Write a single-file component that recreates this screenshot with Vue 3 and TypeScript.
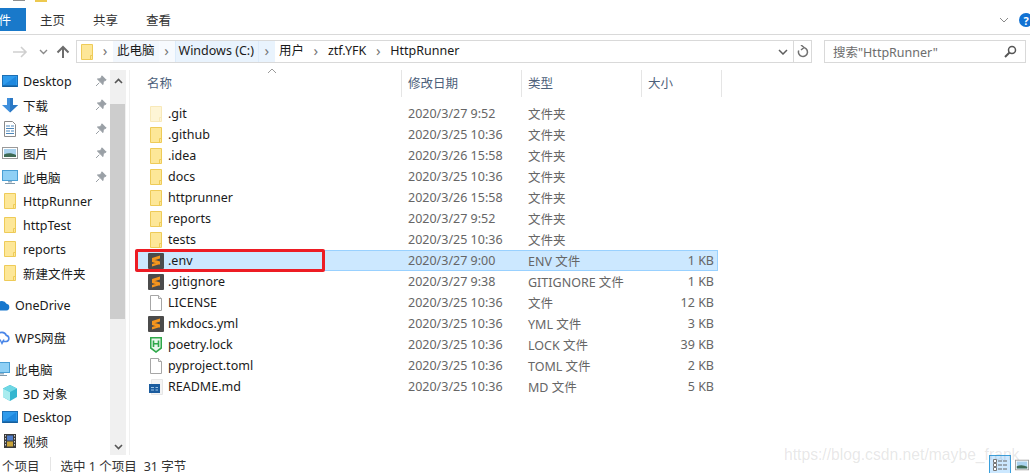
<script setup lang="ts">
interface NavItem { label: string; icon: string; pin?: boolean; gap?: boolean; shift?: boolean }
interface FileItem { name: string; date: string; type: string; size?: string; icon: string; selected?: boolean }

const nav: NavItem[] = [
  { label: 'Desktop', icon: 'i-desktop', pin: true },
  { label: '下载', icon: 'i-down', pin: true },
  { label: '文档', icon: 'i-doc', pin: true },
  { label: '图片', icon: 'i-pic', pin: true },
  { label: '此电脑', icon: 'i-pc', pin: true },
  { label: 'HttpRunner', icon: 'i-folder' },
  { label: 'httpTest', icon: 'i-folder' },
  { label: 'reports', icon: 'i-folder' },
  { label: '新建文件夹', icon: 'i-folder' },
  { label: 'OneDrive', icon: 'i-cloud', gap: true, shift: true },
  { label: 'WPS网盘', icon: 'i-wps', gap: true, shift: true },
  { label: '此电脑', icon: 'i-pc', gap: true, shift: true },
  { label: '3D 对象', icon: 'i-cube' },
  { label: 'Desktop', icon: 'i-desktop' },
  { label: '视频', icon: 'i-film' },
]

const files: FileItem[] = [
  { name: '.git', date: '2020/3/27 9:52', type: '文件夹', icon: 'i-folder-pale' },
  { name: '.github', date: '2020/3/25 10:36', type: '文件夹', icon: 'i-folder' },
  { name: '.idea', date: '2020/3/26 15:58', type: '文件夹', icon: 'i-folder' },
  { name: 'docs', date: '2020/3/25 10:36', type: '文件夹', icon: 'i-folder' },
  { name: 'httprunner', date: '2020/3/26 15:58', type: '文件夹', icon: 'i-folder' },
  { name: 'reports', date: '2020/3/27 9:52', type: '文件夹', icon: 'i-folder' },
  { name: 'tests', date: '2020/3/25 10:36', type: '文件夹', icon: 'i-folder' },
  { name: '.env', date: '2020/3/27 9:00', type: 'ENV 文件', size: '1 KB', icon: 'i-sublime', selected: true },
  { name: '.gitignore', date: '2020/3/27 9:38', type: 'GITIGNORE 文件', size: '1 KB', icon: 'i-sublime' },
  { name: 'LICENSE', date: '2020/3/25 10:36', type: '文件', size: '12 KB', icon: 'i-blank' },
  { name: 'mkdocs.yml', date: '2020/3/25 10:36', type: 'YML 文件', size: '3 KB', icon: 'i-sublime' },
  { name: 'poetry.lock', date: '2020/3/25 10:36', type: 'LOCK 文件', size: '39 KB', icon: 'i-hbuilder' },
  { name: 'pyproject.toml', date: '2020/3/25 10:36', type: 'TOML 文件', size: '2 KB', icon: 'i-blank' },
  { name: 'README.md', date: '2020/3/25 10:36', type: 'MD 文件', size: '5 KB', icon: 'i-md' },
]
</script>

<template>
  <div class="window">
    <svg class="defs" aria-hidden="true">
      <symbol id="i-folder" viewBox="0 0 16 16">
        <path d="M2.5 .5H13.5V15.5H2.5Z" fill="#fde798" stroke="#eecb58" />
        <path d="M11.5 15.5V11.5H13.5" fill="none" stroke="#eecb58" />
      </symbol>
      <symbol id="i-folder-pale" viewBox="0 0 16 16">
        <path d="M2.5 .5H13.5V15.5H2.5Z" fill="#fef5d6" stroke="#f8e9b9" />
        <path d="M11.5 15.5V11.5H13.5" fill="none" stroke="#f8e9b9" />
      </symbol>
      <symbol id="i-sublime" viewBox="0 0 16 16">
        <rect width="16" height="16" rx="1" fill="#4b4b4b" />
        <path d="M4 5 12 2.500V5.500L4 8ZM4 6 12 8.500V11.500L4 9ZM4 11 12 8.500V11L4 13.500Z" fill="#f5951d" />
      </symbol>
      <symbol id="i-blank" viewBox="0 0 16 16">
        <path d="M2.5 .5H10.5L13.5 3.5V15.5H2.5Z" fill="#fff" stroke="#a6a6a6" />
        <path d="M10.5 .5V3.5H13.5" fill="#f0f0f0" stroke="#a6a6a6" />
      </symbol>
      <symbol id="i-hbuilder" viewBox="0 0 16 16">
        <path d="M2 0H14V11.5L8 16 2 11.5Z" fill="#2fa84a" />
        <path d="M3.5 1.5H12.5V10.5L8 14 3.5 10.5Z" fill="#e9f7ec" />
        <path d="M5.5 3.5V10M10.5 3.5V10M5.5 6.7H10.5" stroke="#2fa84a" stroke-width="1.6" fill="none" />
      </symbol>
      <symbol id="i-md" viewBox="0 0 16 16">
        <path d="M3.5 .5H14.5V15.5H3.5Z" fill="#f4f4f4" stroke="#e6e6e6" />
        <rect x="1" y="5" width="11" height="9" fill="#1b5c9e" />
        <path d="M3 8.500H6M3 11H6M7.500 8.500H10M7.500 11H10" stroke="#9cc3e6" fill="none" />
      </symbol>
      <symbol id="i-desktop" viewBox="0 0 16 16">
        <rect x=".5" y="2.5" width="15" height="11" fill="#2f9bec" stroke="#1c6fb5" />
        <path d="M1 12.5 14 3.5V12.5Z" fill="#1f88de" />
        <path d="M1 13H15" stroke="#0e4e86" />
      </symbol>
      <symbol id="i-down" viewBox="0 0 16 16">
        <path d="M5 1H11V8H16L8 15.5 0 8H5Z" fill="#3f8fdc" />
        <path d="M8 1H11V8H16L8 15.5Z" fill="#2b78c4" />
      </symbol>
      <symbol id="i-doc" viewBox="0 0 16 16">
        <path d="M2.5 .5H10.5L13.5 3.5V15.5H2.5Z" fill="#fff" stroke="#8a8a8a" />
        <path d="M4 5H8M9 5H12M4 7.5H12M4 10H8M9 10H12M4 12.5H12" stroke="#4d87bb" fill="none" />
      </symbol>
      <symbol id="i-pic" viewBox="0 0 16 16">
        <rect x=".5" y="2.5" width="15" height="11" fill="#fff" stroke="#9a9a9a" />
        <rect x="2" y="4" width="12" height="8" fill="#a9d2ee" />
        <path d="M2 9.5C6 7.5 10 8 14 10V12H2Z" fill="#3f6b55" />
      </symbol>
      <symbol id="i-pc" viewBox="0 0 16 16">
        <rect x=".5" y="1.5" width="15" height="10" fill="#8fd0f5" stroke="#4a9fd4" />
        <path d="M6 12H10V13.5H6Z" fill="#9ab1c2" />
        <path d="M3 14.5H13" stroke="#8099ab" />
      </symbol>
      <symbol id="i-cloud" viewBox="0 0 16 16">
        <path d="M4 13.5A3.5 3.5 0 0 1 3.5 6.6 5 5 0 0 1 12.5 6.8 3.4 3.4 0 0 1 12.5 13.5Z" fill="#1677cd" />
      </symbol>
      <symbol id="i-wps" viewBox="0 0 16 16">
        <path d="M4 12.5A3.2 3.2 0 0 1 3.7 6.2 4.6 4.6 0 0 1 12.3 6.4 3.1 3.1 0 0 1 12.3 12.5H8" fill="none" stroke="#4a86e8" stroke-width="1.6" />
        <path d="M6 10.5 8 14.5 10 10.5" fill="none" stroke="#4a86e8" stroke-width="1.4" />
      </symbol>
      <symbol id="i-cube" viewBox="0 0 16 16">
        <path d="M8 0 15 3.5V12L8 16 1 12V3.5Z" fill="#35b6cf" />
        <path d="M1 3.5 8 7V16L1 12Z" fill="#a8ecef" />
        <path d="M8 0 15 3.5 8 7 1 3.5Z" fill="#6fd7e4" />
      </symbol>
      <symbol id="i-film" viewBox="0 0 16 16">
        <rect x="2" y="1" width="12" height="14" fill="#3b3b3b" />
        <rect x="5" y="2.500" width="6" height="5" fill="#4f7bc8" />
        <rect x="5" y="8.500" width="6" height="5" fill="#c8a33a" />
        <path d="M3.500 2V14M12.500 2V14" stroke="#cfcfcf" stroke-dasharray="1.500 1.500" fill="none" />
      </symbol>
      <symbol id="i-pin" viewBox="0 0 12 12">
        <path d="M7 .8 11.200 5 9.800 5.600 8.200 7.200 8 9.600 2.400 4 4.800 3.800 6.400 2.200ZM4.300 7.700 1 11" fill="#9aa0a6" stroke="#9aa0a6" />
      </symbol>
    </svg>

    <div class="title-bits">
      <span class="bit bit-gray"></span>
      <span class="bit bit-yellow"></span>
    </div>

    <header class="ribbon">
      <div class="file-tab"><span class="file-text">件</span></div>
      <nav class="tabs">
        <span>主页</span>
        <span>共享</span>
        <span>查看</span>
      </nav>
      <div class="ribbon-right">
        <svg class="collapse" width="10" height="6" viewBox="0 0 10 6"><path d="M1 1 5 5 9 1" fill="none" stroke="#8a8a8a" /></svg>
        <span class="help">?</span>
      </div>
    </header>

    <div class="address-row">
      <div class="nav-buttons">
        <svg width="16" height="14" viewBox="0 0 16 14" class="nav-back"><path d="M1 7H14M9 2 14 7 9 12" fill="none" stroke="#cfcfcf" stroke-width="1.600" /></svg>
        <svg width="9" height="6" viewBox="0 0 9 6" class="nav-drop"><path d="M1 1 4.500 4.500 8 1" fill="none" stroke="#8a8a8a" stroke-width="1.400" /></svg>
        <svg width="14" height="14" viewBox="0 0 14 14" class="nav-up"><path d="M7 13V2M1.500 7.500 7 2 12.500 7.500" fill="none" stroke="#6d6d6d" stroke-width="2" /></svg>
      </div>
      <div class="address">
        <svg class="addr-folder" width="16" height="16"><use href="#i-folder" /></svg>
        <span class="crumb-arrow">›</span>
        <span class="crumb hot">此电脑</span>
        <span class="crumb-arrow hot-soft">›</span>
        <span class="crumb hot win">Windows (C:)</span>
        <span class="crumb-arrow hot last">›</span>
        <span class="crumb">用户</span>
        <span class="crumb-arrow">›</span>
        <span class="crumb">ztf.YFK</span>
        <span class="crumb-arrow">›</span>
        <span class="crumb">HttpRunner</span>
        <span class="addr-space"></span>
        <svg class="addr-drop" width="10" height="6" viewBox="0 0 10 6"><path d="M1 1 5 5 9 1" fill="none" stroke="#5e5e5e" stroke-width="1.500" /></svg>
        <span class="addr-refresh">
          <svg width="12" height="13" viewBox="0 0 12 13"><path d="M6 2.500A4.500 4.500 0 1 1 1.700 5.500M4 0 7 2.500 4 5" fill="none" stroke="#707070" stroke-width="1.500" /></svg>
        </span>
      </div>
      <div class="search">
        <span>搜索"HttpRunner"</span>
        <svg width="13" height="13" viewBox="0 0 13 13"><circle cx="8" cy="5" r="3.500" fill="none" stroke="#555" stroke-width="1.500" /><path d="M5.500 7.500 1 12" stroke="#555" stroke-width="2" /></svg>
      </div>
    </div>

    <main class="body">
      <aside class="sidebar">
        <ul class="nav-list">
          <li v-for="(item, i) in nav" :key="i" class="nav-item" :class="{ gap: item.gap, shift: item.shift }">
            <svg class="nav-icon" width="16" height="16"><use :href="'#' + item.icon" /></svg>
            <span class="nav-label">{{ item.label }}</span>
            <svg v-if="item.pin" class="pin" width="12" height="12"><use href="#i-pin" /></svg>
          </li>
        </ul>
        <div class="scrollbar">
          <div class="sb-btn">
            <svg width="9" height="6" viewBox="0 0 9 6"><path d="M1 5 4.500 1.500 8 5" fill="none" stroke="#555" stroke-width="1.600" /></svg>
          </div>
          <div class="sb-thumb"></div>
          <div class="sb-fill"></div>
          <div class="sb-btn-low">
            <svg width="9" height="6" viewBox="0 0 9 6"><path d="M1 1 4.500 4.500 8 1" fill="none" stroke="#555" stroke-width="1.600" /></svg>
          </div>
        </div>
      </aside>

      <section class="content">
        <svg class="sort" width="10" height="6" viewBox="0 0 10 6"><path d="M1 5 5 1 9 5" fill="none" stroke="#9a9a9a" /></svg>
        <div class="col-head">
          <span class="h-name">名称</span>
          <span class="h-date">修改日期</span>
          <span class="h-type">类型</span>
          <span class="h-size">大小</span>
        </div>
        <ul class="file-list">
          <li v-for="f in files" :key="f.name" class="file-row" :class="{ selected: f.selected }">
            <svg class="file-icon" width="16" height="16"><use :href="'#' + f.icon" /></svg>
            <span class="f-name">{{ f.name }}</span>
            <span class="f-meta">{{ f.date }}</span>
            <span class="f-meta">{{ f.type }}</span>
            <span class="f-meta f-size">{{ f.size }}</span>
          </li>
        </ul>
      </section>
    </main>

    <footer class="status">
      <span class="st-count">个项目</span>
      <span class="st-sep"></span>
      <span class="st-sel">选中 1 个项目</span>
      <span class="st-bytes">31 字节</span>
      <span class="st-space"></span>
      <span class="view-list">
        <svg width="16" height="13" viewBox="0 0 16 13"><path d="M1.500 1.500H4.500V4.500H1.500ZM1.500 5.500H4.500V8.500H1.500ZM1.500 9.500H4.500V12.500H1.500Z" fill="#fff" stroke="#777" /><path d="M6 3H10M11 3H15M6 7H10M11 7H15M6 11H10M11 11H15" stroke="#666" /></svg>
      </span>
      <svg class="view-pic" width="14" height="14"><use href="#i-pic" /></svg>
    </footer>

    <div class="annotation"></div>
    <div class="watermark">https://blog.csdn.net/maybe_frank</div>
  </div>
</template>

<style>
html, body { margin: 0; background: #fff; }
</style>

<style scoped>
.window {
  position: relative;
  width: 1030px;
  height: 473px;
  overflow: hidden;
  background: #fff;
  display: flex;
  flex-direction: column;
  font-family: "Noto Sans", "Noto Sans CJK SC", sans-serif;
  font-size: 12.5px;
  color: #1a1a1a;
}
.defs { position: absolute; width: 0; height: 0; }
ul { list-style: none; margin: 0; padding: 0; }
svg { display: block; flex: none; }

.title-bits { height: 8px; display: flex; padding-left: 13px; gap: 10px; }
.bit { height: 1px; width: 12px; }
.bit-gray { background: #8f8f8f; }
.bit-yellow { background: #edc94f; height: 2px; }

.ribbon {
  height: 26px;
  border-bottom: 1px solid #d9d9d9;
  display: flex;
  align-items: flex-start;
}
.file-tab {
  width: 26px;
  height: 23px;
  background: #1979ca;
  color: #fff;
  display: flex;
  align-items: center;
  justify-content: flex-end;
}
.file-text { margin-right: 15px; }
.tabs { display: flex; gap: 28px; margin-left: 14px; height: 23px; align-items: center; color: #333; }
.ribbon-right { margin-left: auto; display: flex; align-items: center; gap: 10px; height: 26px; margin-right: -3px; padding-bottom: 2px; box-sizing: border-box; }
.help {
  width: 14px; height: 14px; border-radius: 50%;
  background: #1272d3; color: #fff; font-size: 11px; font-weight: 700;
  display: flex; align-items: center; justify-content: center;
}

.address-row { height: 35px; display: flex; align-items: flex-start; padding-top: 5px; box-sizing: border-box; }
.nav-buttons { width: 76px; height: 23px; display: flex; align-items: center; flex: none; }
.nav-back { margin-left: 12px; }
.nav-drop { margin-left: 11px; }
.nav-up { margin-left: 8px; }
.address {
  width: 736px; height: 23px; box-sizing: border-box;
  border: 1px solid #d9d9d9;
  display: flex; align-items: center;
  color: #1a1a1a;
}
.addr-folder { margin-left: 2px; margin-right: 2px; }
.crumb { padding: 0 4px 2px; line-height: 19px; }
.crumb-arrow { width: 16px; text-align: center; color: #777; font-size: 15px; line-height: 19px; height: 21px; }
.crumb.hot { background: #f2f7fd; }
.crumb.win { background: #e9f3fd; border-left: 1px solid #dcebfa; padding-left: 3px; }
.crumb-arrow.hot-soft { background: #f7fafe; }
.crumb-arrow.hot.last { background: #e9f3fd; border-left: 1px solid #dcebfa; }
.addr-space { flex: 1; }
.addr-drop { margin-right: 5px; }
.addr-refresh { width: 17px; height: 21px; border-left: 1px solid #d9d9d9; display: flex; align-items: center; justify-content: center; }
.search {
  margin-left: 12px; width: 202px; height: 23px; box-sizing: border-box;
  border: 1px solid #d9d9d9;
  display: flex; align-items: center; justify-content: space-between;
  padding: 0 8px 0 8px; color: #6d6d6d;
}

.body { flex: 1; min-height: 0; display: flex; }
.sidebar { width: 126px; flex: none; display: flex; }
.nav-list { width: 110px; flex: none; margin-top: -1px; }
.nav-item { height: 24px; display: flex; align-items: center; padding-left: 2px; color: #1a1a1a; white-space: nowrap; }
.nav-item.gap { margin-top: 8px; }
.nav-item.shift { margin-left: -8px; }
.nav-icon { margin-right: 5px; }
.nav-label { flex: 1; }
.pin { margin-right: 3px; }
.scrollbar { width: 16px; flex: none; background: #f0f0f0; display: flex; flex-direction: column; }
.sb-btn { height: 34px; display: flex; justify-content: center; padding-top: 8px; box-sizing: border-box; }
.sb-thumb { height: 215px; width: 15px; background: #cdcdcd; }
.sb-fill { flex: 1; }
.sb-btn-low { height: 17px; display: flex; justify-content: center; align-items: center; }

.content { flex: 1; position: relative; margin-left: 3px; border-left: 1px solid #f0f0f0; padding-left: 5px; }
.sort { position: absolute; left: 137px; top: -2px; }
.col-head {
  height: 27px;
  display: grid;
  grid-template-columns: 267px 120px 120px 80px;
  align-items: center;
  color: #4c607a;
  margin-bottom: 6px;
}
.col-head span { padding-left: 6px; border-right: 1px solid #e5e5e5; height: 27px; line-height: 27px; box-sizing: border-box; }
.col-head .h-name { padding-left: 12px; }
.file-row {
  width: 583px; height: 21px; box-sizing: border-box;
  display: grid;
  grid-template-columns: 33px 240px 120px 120px 1fr;
  align-items: center;
  white-space: nowrap;
}
.file-icon { margin-left: 13px; }
.f-name { color: #1a1a1a; }
.f-meta { color: #666; }
.f-size { text-align: right; padding-right: 4px; }
.file-row.selected { background: #cce8ff; outline: 1px solid #99d1ff; outline-offset: -1px; }

.status {
  height: 18px; flex: none; display: flex; align-items: center; color: #333; padding-left: 2px;
}
.st-count, .st-sel, .st-bytes { position: relative; top: 1px; }
.st-sep { width: 1px; height: 14px; background: #e5e5e5; margin: 0 10px; }
.st-bytes { margin-left: 7px; }
.st-space { flex: 1; }
.view-list {
  width: 22px; height: 18px; box-sizing: border-box;
  background: #cce8ff; border: 1px solid #3a9fdc; border-bottom: 0;
  display: flex; justify-content: center; align-items: center; margin-right: 4px;
}
.view-pic { margin-right: 1px; margin-top: 2px; }

.annotation {
  position: absolute; left: 135px; top: 249px; width: 190px; height: 23px;
  box-sizing: border-box; border: 3px solid #ed1c24; border-radius: 2px;
}
.watermark {
  position: absolute; left: 784px; top: 446px;
  font-family: "Liberation Sans", sans-serif; font-size: 15.7px; color: rgba(120,120,120,.18);
  white-space: nowrap;
}
</style>
